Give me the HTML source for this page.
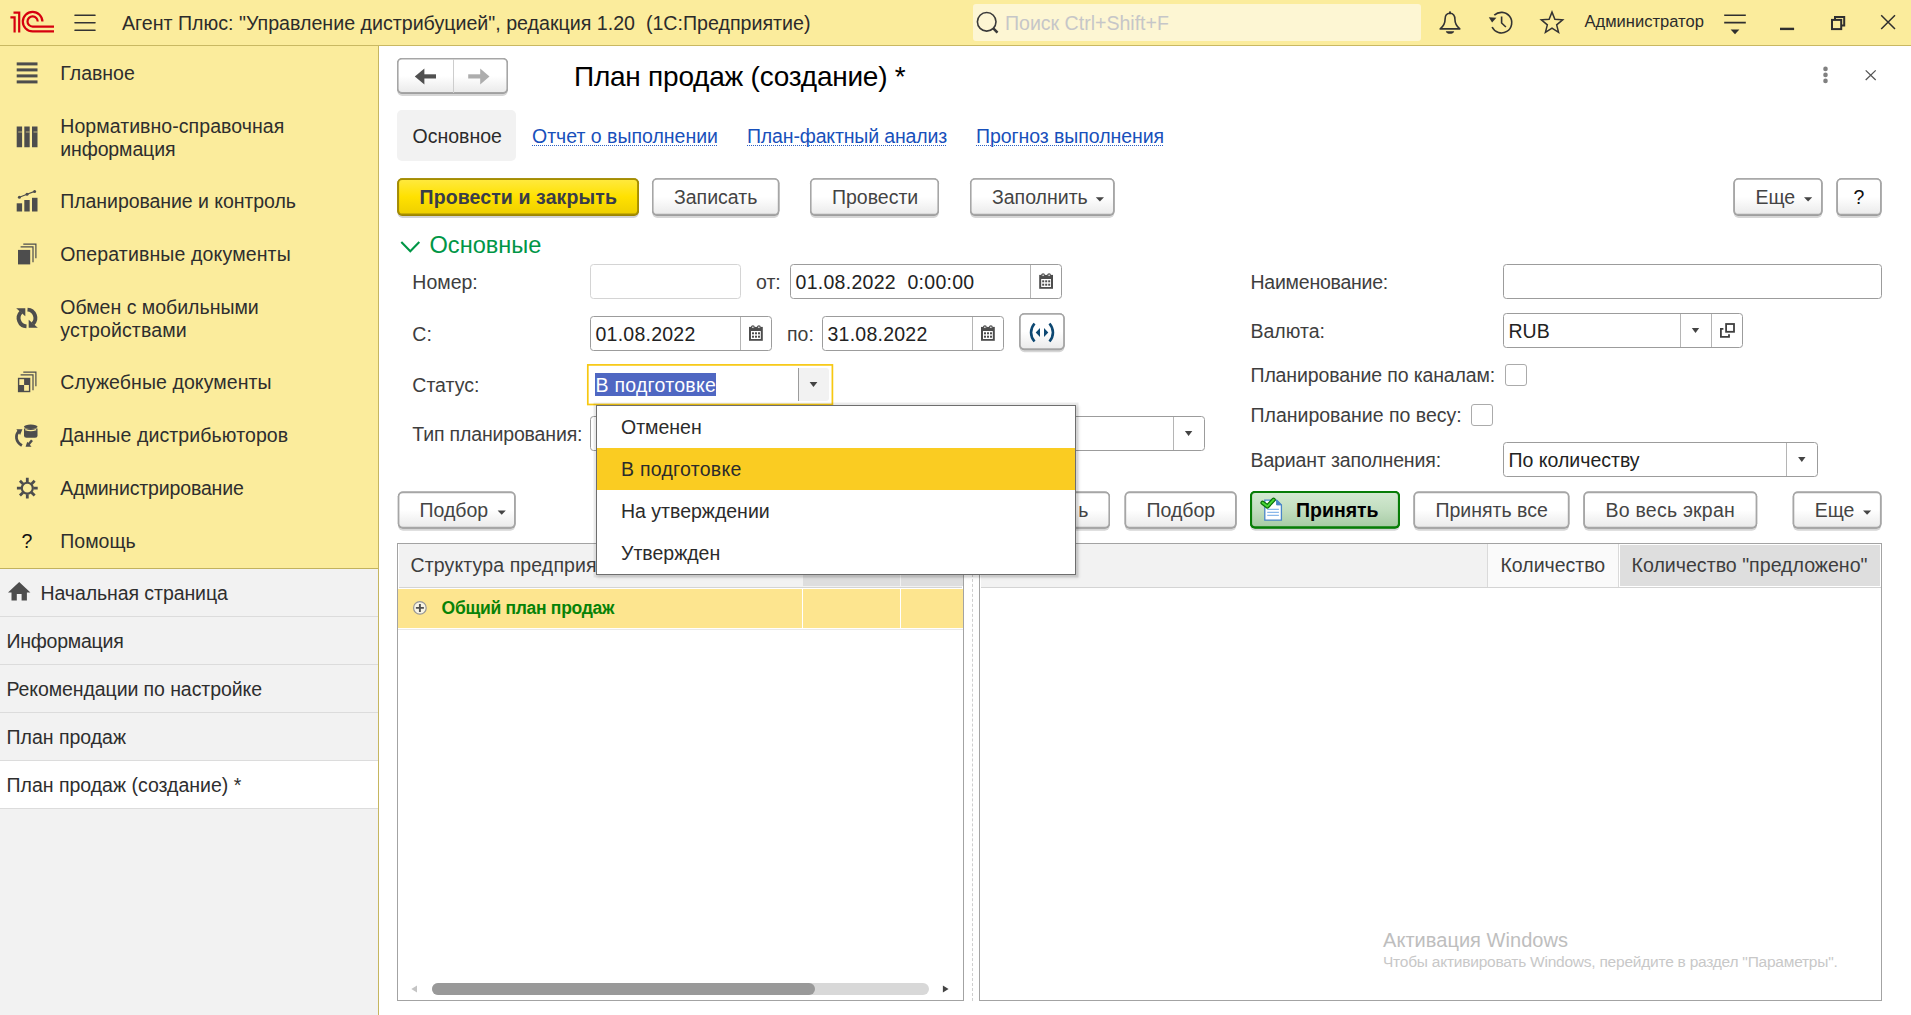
<!DOCTYPE html><html lang="ru"><head><meta charset="utf-8"><title>План продаж (создание)</title><style>
*{box-sizing:border-box;margin:0;padding:0}
html,body{width:1911px;height:1015px;overflow:hidden;background:#fff}
body{position:relative;font-family:"Liberation Sans",Arial,sans-serif;font-size:19.5px;color:#333}
.t{position:absolute;white-space:pre}
.b{position:absolute}
svg{position:absolute;overflow:visible}
.inp{position:absolute;border:1px solid #9c9c9c;border-radius:3.5px;background:#fff}
.lnk{color:#1850bb;}
.ul{position:absolute;height:0;border-top:1.4px dotted #2a5fc4}
</style></head><body>
<svg style="left:0;top:0" width="1" height="1"><defs><linearGradient id="gn" x1="0" y1="0" x2="0" y2="1"><stop offset="0" stop-color="#fff"/><stop offset="0.5" stop-color="#fff"/><stop offset="1" stop-color="#ebebeb"/></linearGradient><linearGradient id="gy" x1="0" y1="0" x2="0" y2="1"><stop offset="0" stop-color="#ffe93c"/><stop offset="0.5" stop-color="#ffe100"/><stop offset="1" stop-color="#efd000"/></linearGradient><linearGradient id="gg" x1="0" y1="0" x2="0" y2="1"><stop offset="0" stop-color="#d3e9d1"/><stop offset="0.5" stop-color="#c2dec0"/><stop offset="1" stop-color="#a8cca6"/></linearGradient></defs></svg>
<div class="b" style="left:0px;top:0px;width:1911px;height:46px;background:#fbec9c;border-bottom:1px solid #c9b862"></div>
<svg style="left:0;top:0" width="60" height="45" viewBox="0 0 60 45" fill="none" stroke="#d6000f" stroke-width="2.2" stroke-linejoin="miter">
<path d="M13.5 12.7H19.2V32.6"/><path d="M10.4 17.3H14.6V32.6"/>
<path d="M42.4 21.6A9.8 9.8 0 1 0 32.6 31.4H54"/>
<path d="M37.7 21.6A5.1 5.1 0 1 0 32.6 26.6H54"/>
</svg>
<svg style="left:0;top:0" width="120" height="45" stroke="#333" stroke-width="1.6" stroke-linecap="round"><path d="M75 15.2H95M75 22.7H95M75 30.2H95"/></svg>
<div class="t " style="left:122px;top:14px;font-size:19.64px;line-height:19.64px;color:#2b2b2b;font-weight:400;">Агент Плюс: "Управление дистрибуцией", редакция 1.20  (1С:Предприятие)</div>
<div class="b" style="left:973px;top:4px;width:448px;height:37px;background:#fdf6d3;border-radius:3px"></div>
<svg style="left:0;top:0" width="1911" height="45" fill="none" stroke="#3a3a3a" stroke-width="1.6"><circle cx="986.7" cy="21.8" r="9.3"/><path d="M993.3 28.4L997.5 32.6" stroke-width="2.6"/></svg>
<div class="t " style="left:1005px;top:14px;font-size:19.56px;line-height:19.56px;color:#c6c6c8;font-weight:400;">Поиск Ctrl+Shift+F</div>
<svg style="left:0;top:0" width="1911" height="45" fill="none" stroke="#333" stroke-width="1.6" stroke-linejoin="round">
<path d="M1450 13.300c-3.300 0-4.900 2.400-4.900 5.800c0 4.800-1.500 7.200-4.900 9.800h19.600c-3.400-2.600-4.900-5-4.900-9.800c0-3.400-1.600-5.800-4.900-5.800z"/>
<circle cx="1450" cy="12.300" r="1.100" fill="#333" stroke="none"/>
<path d="M1445.800 31.200h8.400c-0.800 3.500-7.600 3.500-8.400 0z" fill="#333" stroke="none"/>
<path d="M1494.300 15.200A10.300 10.300 0 1 1 1492.100 27"/>
<path d="M1488.800 17.200l7.600 0.600-4.300 4.600z" fill="#333" stroke="none"/>
<path d="M1501.600 16.600v6.400l4.300 4"/>
<path d="M1552.00 12.10L1554.88 19.34L1562.65 19.84L1556.66 24.81L1558.58 32.36L1552.00 28.20L1545.42 32.36L1547.34 24.81L1541.35 19.84L1549.12 19.34z" stroke-linejoin="miter" stroke-width="1.500"/>
</svg>
<div class="t " style="left:1584.5px;top:14px;font-size:16.56px;line-height:16.56px;color:#2b2b2b;font-weight:400;">Администратор</div>
<svg style="left:0;top:0" width="1911" height="45" fill="none" stroke="#2f2f2f" stroke-width="1.6">
<path d="M1724.200 15.200H1745.800M1724.200 22.600H1745.800"/><path d="M1730.600 29.600h8.800l-4.400 4.600z" fill="#2f2f2f" stroke="none"/>
<path d="M1780 28.900H1794.100" stroke-width="2.400"/>
<rect x="1832" y="19.900" width="9.200" height="9.200" stroke-width="2"/><path d="M1835 19.900V17H1844.200V25.500H1841.200" stroke-width="2"/>
<path d="M1881.200 15.200L1895 29M1895 15.200L1881.200 29" stroke-width="1.500"/>
</svg>
<div class="b" style="left:0px;top:46px;width:378px;height:522px;background:#fbec9c"></div>
<div class="b" style="left:0px;top:568px;width:378px;height:447px;background:#f2f2f2;border-top:1px solid #c2b25e"></div>
<div class="b" style="left:378px;top:46px;width:1px;height:969px;background:#c6b660"></div>
<div class="t " style="left:60.3px;top:64px;font-size:19.5px;line-height:19.5px;color:#2e2e2e;font-weight:400;">Главное</div>
<div class="t " style="left:60.3px;top:117px;font-size:19.5px;line-height:19.5px;color:#2e2e2e;font-weight:400;letter-spacing:0.057px;">Нормативно-справочная</div>
<div class="t " style="left:60.3px;top:140px;font-size:19.5px;line-height:19.5px;color:#2e2e2e;font-weight:400;letter-spacing:-0.120px;">информация</div>
<div class="t " style="left:60.3px;top:192px;font-size:19.5px;line-height:19.5px;color:#2e2e2e;font-weight:400;letter-spacing:-0.061px;">Планирование и контроль</div>
<div class="t " style="left:60.3px;top:245px;font-size:19.5px;line-height:19.5px;color:#2e2e2e;font-weight:400;letter-spacing:0.143px;">Оперативные документы</div>
<div class="t " style="left:60.3px;top:298px;font-size:19.5px;line-height:19.5px;color:#2e2e2e;font-weight:400;">Обмен с мобильными</div>
<div class="t " style="left:60.3px;top:321px;font-size:19.5px;line-height:19.5px;color:#2e2e2e;font-weight:400;letter-spacing:0.142px;">устройствами</div>
<div class="t " style="left:60.3px;top:373px;font-size:19.5px;line-height:19.5px;color:#2e2e2e;font-weight:400;letter-spacing:0.084px;">Служебные документы</div>
<div class="t " style="left:60.3px;top:426px;font-size:19.5px;line-height:19.5px;color:#2e2e2e;font-weight:400;letter-spacing:0.110px;">Данные дистрибьюторов</div>
<div class="t " style="left:60.3px;top:479px;font-size:19.5px;line-height:19.5px;color:#2e2e2e;font-weight:400;letter-spacing:-0.153px;">Администрирование</div>
<div class="t " style="left:60.3px;top:532px;font-size:19.5px;line-height:19.5px;color:#2e2e2e;font-weight:400;">Помощь</div>
<div class="t " style="left:21.6px;top:532px;font-size:19.5px;line-height:19.5px;color:#111;font-weight:400;">?</div>
<svg style="left:0;top:0" width="60" height="620" fill="#4d4d4d" stroke="none">
<rect x="16.700" y="62.400" width="20.800" height="3"/><rect x="16.700" y="68.400" width="20.800" height="3"/><rect x="16.700" y="74.400" width="20.800" height="3"/><rect x="16.700" y="80.400" width="20.800" height="3"/>
<path d="M16.700 126.500h5.400v20.800h-5.400zM24.300 126.500h5.400v20.800h-5.400zM32 126.500h5.500v20.800h-5.500z"/><path d="M18.200 132h3.900M25.800 132h3.900M33.500 132h4" stroke="#fbec9c" stroke-width="0.800" opacity="0.800"/>
<rect x="16.700" y="203.300" width="5.400" height="8.200"/><rect x="24.300" y="200" width="5.400" height="11.500"/><rect x="32" y="197.800" width="5.500" height="13.700"/>
<path d="M19.400 197.300L27 194.300L34.600 191.400" stroke="#4d4d4d" stroke-width="1.200" fill="none"/><circle cx="19.400" cy="197.300" r="1.500"/><circle cx="27" cy="194.300" r="1.500"/><circle cx="34.600" cy="191.400" r="1.500"/>
<rect x="18" y="249.900" width="12.200" height="14.500"/>
<path d="M20.600 246.900H33V262.300M23.300 244.100H35.900V258.300" stroke="#4d4d4d" stroke-width="1.200" fill="none"/>
<!-- sync -->
<g fill="none" stroke="#4d4d4d" stroke-width="3.900">
<path d="M26.500 326.350A8.350 8.350 0 0 1 21.100 312.100"/>
<path d="M27.500 309.650A8.350 8.350 0 0 1 32.900 323.900"/>
</g>
<path d="M16.200 308.200h9.100v8.100z"/><path d="M37.800 327.800h-9.100v-8.100z"/>
<!-- service docs -->
<rect x="18.600" y="378.500" width="11" height="13" fill="none" stroke="#4d4d4d" stroke-width="1.400"/>
<rect x="24.100" y="378.500" width="5.500" height="6.500"/><rect x="18.600" y="385" width="5.500" height="6.500"/>
<path d="M20.600 374.900H33V390.300M23.300 372.100H35.900V386.300" stroke="#4d4d4d" stroke-width="1.200" fill="none"/>
<!-- distributors data -->
<ellipse cx="30.750" cy="426.700" rx="6.800" ry="2.200"/>
<path d="M24 428.600h13.500v6.600a2.500 2.500 0 0 1 -2.500 2.500h-8.500a2.500 2.500 0 0 1 -2.500 -2.500z"/>
<path d="M25.300 429.600Q30.750 431.600 36.200 429.600" stroke="#fbec9c" stroke-width="1.300" fill="none"/>
<path d="M21.900 445.500C15.300 441.500 15 435 19.200 430.800" stroke="#4d4d4d" stroke-width="2.700" fill="none"/>
<path d="M16.400 429.200h6l-2.300 5.700z"/>
<path d="M32 440.200L28.300 444.800" stroke="#4d4d4d" stroke-width="2.500" fill="none"/>
<path d="M25.600 446.800h5.900l-4.300-5z"/>
<!-- gear -->
<g transform="translate(27.300 488.200)">
<circle r="5.450" fill="none" stroke="#4d4d4d" stroke-width="2.100"/>
<g stroke="#4d4d4d" stroke-width="2.800">
<path d="M0 -10.400V-6M0 10.400V6M-10.400 0H-6M10.400 0H6M-7.350 -7.350L-4.250 -4.250M7.350 7.350L4.250 4.250M-7.350 7.350L-4.250 4.250M7.350 -7.350L4.250 -4.250"/>
</g></g>
<!-- home -->
<path d="M19.200 582L8 592.500H11.500V600.500H16.800V594H21.600V600.500H26.900V592.500H30.400z"/>
</svg>
<div class="t " style="left:40.5px;top:584px;font-size:19.5px;line-height:19.5px;color:#2e2e2e;font-weight:400;letter-spacing:-0.078px;">Начальная страница</div>
<div class="b" style="left:0px;top:616px;width:378px;height:1px;background:#dcdcdc"></div>
<div class="t " style="left:6.5px;top:632px;font-size:19.5px;line-height:19.5px;color:#2e2e2e;font-weight:400;letter-spacing:-0.240px;">Информация</div>
<div class="b" style="left:0px;top:664px;width:378px;height:1px;background:#dcdcdc"></div>
<div class="t " style="left:6.5px;top:680px;font-size:19.5px;line-height:19.5px;color:#2e2e2e;font-weight:400;letter-spacing:-0.084px;">Рекомендации по настройке</div>
<div class="b" style="left:0px;top:712px;width:378px;height:1px;background:#dcdcdc"></div>
<div class="t " style="left:6.5px;top:728px;font-size:19.5px;line-height:19.5px;color:#2e2e2e;font-weight:400;">План продаж</div>
<div class="b" style="left:0px;top:760px;width:378px;height:48.5px;background:#fff;border-top:1px solid #dcdcdc;border-bottom:1px solid #dcdcdc"></div>
<div class="t " style="left:6.5px;top:776px;font-size:19.5px;line-height:19.5px;color:#2e2e2e;font-weight:400;">План продаж (создание) *</div>
<svg style="left:396px;top:57px" width="114.0" height="42.0"><rect x="1.30" y="3.00" width="110.40" height="36.00" rx="5" fill="#d6d6d6"/><rect x="1.00" y="1.00" width="111.00" height="36.00" rx="5" fill="#9b9b9b"/><rect x="1.00" y="1.00" width="111.00" height="35.40" rx="5" fill="#a6a6a6"/><rect x="2.60" y="2.60" width="107.80" height="32.30" rx="3.4" fill="url(#gn)"/></svg>
<div class="b" style="left:453px;top:59px;width:1px;height:34px;background:#cdcdcd"></div>
<svg style="left:0;top:0" width="600" height="100" fill="none">
<path d="M420 76.400H436" stroke="#505050" stroke-width="4.200"/><path d="M414.800 76.400L424.400 68.400V84.400z" fill="#505050"/>
<path d="M468.200 76.400H484" stroke="#adadad" stroke-width="4.200"/><path d="M489.500 76.400L480.200 68.400V84.400z" fill="#adadad"/>
</svg>
<div class="t " style="left:574px;top:63px;font-size:28px;line-height:28px;color:#000;font-weight:400;letter-spacing:-0.233px;">План продаж (создание) *</div>
<svg style="left:0;top:0" width="1911" height="100"><circle cx="1825.500" cy="68.900" r="2.300" fill="#808080"/><circle cx="1825.500" cy="74.900" r="2.300" fill="#808080"/><circle cx="1825.500" cy="80.900" r="2.300" fill="#808080"/>
<path d="M1865.700 70.400L1875.700 80M1875.700 70.400L1865.700 80" stroke="#555" stroke-width="1.300"/></svg>
<div class="b" style="left:397px;top:110px;width:118.5px;height:50.5px;background:#f2f2f2;border-radius:5px"></div>
<div class="t " style="left:412.5px;top:127px;font-size:19.5px;line-height:19.5px;color:#2b2b2b;font-weight:400;">Основное</div>
<div class="t lnk" style="left:532px;top:127px;font-size:19.5px;line-height:19.5px;color:#1850bb;font-weight:400;letter-spacing:0.002px;">Отчет о выполнении</div>
<div class="ul" style="left:532px;top:144.800px;width:185px"></div>
<div class="t lnk" style="left:747px;top:127px;font-size:19.5px;line-height:19.5px;color:#1850bb;font-weight:400;letter-spacing:-0.150px;">План-фактный анализ</div>
<div class="ul" style="left:747px;top:144.800px;width:199px"></div>
<div class="t lnk" style="left:976px;top:127px;font-size:19.5px;line-height:19.5px;color:#1850bb;font-weight:400;letter-spacing:-0.063px;">Прогноз выполнения</div>
<div class="ul" style="left:976px;top:144.800px;width:187px"></div>
<svg style="left:396px;top:177px" width="244.8" height="43.7"><rect x="1.50" y="3.20" width="241.20" height="37.70" rx="5" fill="#d4d4d6"/><rect x="1.20" y="1.20" width="241.80" height="37.70" rx="5" fill="#9a8200"/><rect x="1.20" y="1.20" width="241.80" height="37.10" rx="5" fill="#a58d00"/><rect x="3.10" y="3.10" width="238.00" height="33.40" rx="3.1" fill="url(#gy)"/></svg>
<div class="t " style="left:419.5px;top:188px;font-size:19.5px;line-height:19.5px;color:#383c4a;font-weight:700;letter-spacing:0.111px;">Провести и закрыть</div>
<svg style="left:651px;top:177px" width="130.4" height="43.7"><rect x="1.30" y="3.20" width="126.80" height="37.70" rx="5" fill="#d6d6d6"/><rect x="1.00" y="1.20" width="127.40" height="37.70" rx="5" fill="#9b9b9b"/><rect x="1.00" y="1.20" width="127.40" height="37.10" rx="5" fill="#a6a6a6"/><rect x="2.60" y="2.80" width="124.20" height="34.00" rx="3.4" fill="url(#gn)"/></svg>
<div class="t " style="left:674px;top:188px;font-size:19.5px;line-height:19.5px;color:#444;font-weight:400;">Записать</div>
<svg style="left:809px;top:177px" width="132.0" height="43.7"><rect x="1.30" y="3.20" width="128.40" height="37.70" rx="5" fill="#d6d6d6"/><rect x="1.00" y="1.20" width="129.00" height="37.70" rx="5" fill="#9b9b9b"/><rect x="1.00" y="1.20" width="129.00" height="37.10" rx="5" fill="#a6a6a6"/><rect x="2.60" y="2.80" width="125.80" height="34.00" rx="3.4" fill="url(#gn)"/></svg>
<div class="t " style="left:832px;top:188px;font-size:19.5px;line-height:19.5px;color:#444;font-weight:400;">Провести</div>
<svg style="left:969px;top:177px" width="147.6" height="43.7"><rect x="1.30" y="3.20" width="144.00" height="37.70" rx="5" fill="#d6d6d6"/><rect x="1.00" y="1.20" width="144.60" height="37.70" rx="5" fill="#9b9b9b"/><rect x="1.00" y="1.20" width="144.60" height="37.10" rx="5" fill="#a6a6a6"/><rect x="2.60" y="2.80" width="141.40" height="34.00" rx="3.4" fill="url(#gn)"/></svg>
<div class="t " style="left:992px;top:188px;font-size:19.5px;line-height:19.5px;color:#444;font-weight:400;">Заполнить</div>
<svg style="left:1732px;top:177px" width="92.2" height="43.7"><rect x="1.70" y="3.20" width="88.60" height="37.70" rx="5" fill="#d6d6d6"/><rect x="1.40" y="1.20" width="89.20" height="37.70" rx="5" fill="#9b9b9b"/><rect x="1.40" y="1.20" width="89.20" height="37.10" rx="5" fill="#a6a6a6"/><rect x="3.00" y="2.80" width="86.00" height="34.00" rx="3.4" fill="url(#gn)"/></svg>
<div class="t " style="left:1755.5px;top:188px;font-size:19.5px;line-height:19.5px;color:#444;font-weight:400;">Еще</div>
<svg style="left:1835px;top:177px" width="48.2" height="43.7"><rect x="1.70" y="3.20" width="44.60" height="37.70" rx="5" fill="#d6d6d6"/><rect x="1.40" y="1.20" width="45.20" height="37.70" rx="5" fill="#9b9b9b"/><rect x="1.40" y="1.20" width="45.20" height="37.10" rx="5" fill="#a6a6a6"/><rect x="3.00" y="2.80" width="42.00" height="34.00" rx="3.4" fill="url(#gn)"/></svg>
<div class="t " style="left:1853.6px;top:188px;font-size:19.5px;line-height:19.5px;color:#111;font-weight:400;">?</div>
<svg style="left:0;top:0" width="600" height="300" fill="none" stroke="#009646" stroke-width="2.100"><path d="M401.300 242L410.300 251.200L419.300 242"/></svg>
<div class="t " style="left:429.5px;top:234px;font-size:23.6px;line-height:23.6px;color:#009646;font-weight:400;">Основные</div>
<div class="t " style="left:412.3px;top:273px;font-size:19.5px;line-height:19.5px;color:#3e3e3e;font-weight:400;">Номер:</div>
<div class="inp" style="left:590px;top:264px;width:151px;height:35px;border-color:#d4d4d4"></div>
<div class="t " style="left:756px;top:273px;font-size:19.5px;line-height:19.5px;color:#3e3e3e;font-weight:400;">от:</div>
<div class="inp" style="left:790px;top:264px;width:272px;height:35px;"></div>
<div class="b" style="left:1030px;top:265px;width:1px;height:33px;background:#b5b5b5"></div>
<div class="t " style="left:795.5px;top:273px;font-size:19.5px;line-height:19.5px;color:#222;font-weight:400;letter-spacing:0.290px;">01.08.2022  0:00:00</div>
<div class="t " style="left:412.3px;top:325px;font-size:19.5px;line-height:19.5px;color:#3e3e3e;font-weight:400;">С:</div>
<div class="inp" style="left:590px;top:316px;width:182px;height:35px;"></div>
<div class="b" style="left:740px;top:317px;width:1px;height:33px;background:#b5b5b5"></div>
<div class="t " style="left:595.5px;top:325px;font-size:19.5px;line-height:19.5px;color:#222;font-weight:400;letter-spacing:0.240px;">01.08.2022</div>
<div class="t " style="left:787px;top:325px;font-size:19.5px;line-height:19.5px;color:#3e3e3e;font-weight:400;">по:</div>
<div class="inp" style="left:822px;top:316px;width:182px;height:35px;"></div>
<div class="b" style="left:972px;top:317px;width:1px;height:33px;background:#b5b5b5"></div>
<div class="t " style="left:827.5px;top:325px;font-size:19.5px;line-height:19.5px;color:#222;font-weight:400;letter-spacing:0.240px;">31.08.2022</div>
<svg style="left:1018px;top:312px" width="48.5" height="43.1"><rect x="1.50" y="3.20" width="44.90" height="37.10" rx="5" fill="#d6d6d6"/><rect x="1.20" y="1.20" width="45.50" height="37.10" rx="5" fill="#9b9b9b"/><rect x="1.20" y="1.20" width="45.50" height="36.50" rx="5" fill="#a6a6a6"/><rect x="2.80" y="2.80" width="42.30" height="33.40" rx="3.4" fill="url(#gn)"/></svg>
<svg style="left:0;top:0" width="1200" height="400" fill="none"><path d="M1034.500 323.500c-4.600 5.500-4.600 12.500 0 18M1049.500 323.500c4.600 5.500 4.600 12.500 0 18" stroke="#0d4872" stroke-width="2.600"/><path d="M1035.700 332.500l4.300-4.600v9.200zM1048.300 332.500l-4.300-4.600v9.200z" fill="#0d4872"/></svg>
<div class="t " style="left:412.3px;top:376px;font-size:19.5px;line-height:19.5px;color:#3e3e3e;font-weight:400;">Статус:</div>
<svg style="left:580px;top:360px" width="260" height="50"><rect x="7.800" y="4.900" width="244.600" height="39.600" fill="#fff" stroke="#f7c811" stroke-width="1.700"/></svg>
<div class="b" style="left:799px;top:368px;width:30px;height:33px;background:#f2f2f2;border-radius:0 3px 3px 0"></div>
<div class="b" style="left:798px;top:368px;width:1px;height:33px;background:#9c9c9c"></div>
<div class="b" style="left:595px;top:373px;width:121px;height:23px;background:#4f67c2"></div>
<div class="t " style="left:595.5px;top:376px;font-size:19.5px;line-height:19.5px;color:#fff;font-weight:400;letter-spacing:0.259px;">В подготовке</div>
<div class="t " style="left:412.3px;top:425px;font-size:19.5px;line-height:19.5px;color:#3e3e3e;font-weight:400;letter-spacing:-0.158px;">Тип планирования:</div>
<div class="inp" style="left:590px;top:416px;width:615px;height:35px;"></div>
<div class="b" style="left:1173px;top:417px;width:1px;height:33px;background:#b5b5b5"></div>
<div class="t " style="left:1250.5px;top:273px;font-size:19.5px;line-height:19.5px;color:#3e3e3e;font-weight:400;letter-spacing:-0.238px;">Наименование:</div>
<div class="inp" style="left:1503px;top:264px;width:379px;height:35px;"></div>
<div class="t " style="left:1250.5px;top:322px;font-size:19.5px;line-height:19.5px;color:#3e3e3e;font-weight:400;">Валюта:</div>
<div class="inp" style="left:1503px;top:313px;width:240px;height:35px;"></div>
<div class="b" style="left:1680px;top:314px;width:1px;height:33px;background:#b5b5b5"></div>
<div class="b" style="left:1711px;top:314px;width:1px;height:33px;background:#b5b5b5"></div>
<div class="t " style="left:1508.5px;top:322px;font-size:19.5px;line-height:19.5px;color:#222;font-weight:400;">RUB</div>
<div class="t " style="left:1250.5px;top:366px;font-size:19.5px;line-height:19.5px;color:#3e3e3e;font-weight:400;letter-spacing:-0.137px;">Планирование по каналам:</div>
<div class="b" style="left:1505px;top:364px;width:22px;height:22px;border:1px solid #ababab;border-radius:3px;background:#fff"></div>
<div class="t " style="left:1250.5px;top:406px;font-size:19.5px;line-height:19.5px;color:#3e3e3e;font-weight:400;">Планирование по весу:</div>
<div class="b" style="left:1471px;top:404px;width:22px;height:22px;border:1px solid #ababab;border-radius:3px;background:#fff"></div>
<div class="t " style="left:1250.5px;top:451px;font-size:19.5px;line-height:19.5px;color:#3e3e3e;font-weight:400;letter-spacing:-0.129px;">Вариант заполнения:</div>
<div class="inp" style="left:1503px;top:442px;width:315px;height:35px;"></div>
<div class="b" style="left:1786px;top:443px;width:1px;height:33px;background:#b5b5b5"></div>
<div class="t " style="left:1508.5px;top:451px;font-size:19.5px;line-height:19.5px;color:#222;font-weight:400;">По количеству</div>
<svg style="left:0;top:0" width="1911" height="600"><g transform="translate(1039.2 273.3)"><path d="M0 1.600h13.800v13.900h-13.800z" fill="#4d4d4d"/><rect x="2" y="5.700" width="9.800" height="8" fill="#fff"/><g fill="#4d4d4d"><rect x="3" y="7" width="2" height="2"/><rect x="6" y="7" width="2" height="2"/><rect x="9" y="7" width="2" height="2"/><rect x="3" y="10.400" width="2" height="2"/><rect x="6" y="10.400" width="2" height="2"/><rect x="9" y="10.400" width="2" height="2"/></g><circle cx="3.900" cy="1.900" r="1.350" fill="#fff" stroke="#4d4d4d" stroke-width="1.100"/><circle cx="9.900" cy="1.900" r="1.350" fill="#fff" stroke="#4d4d4d" stroke-width="1.100"/></g><g transform="translate(749 325.3)"><path d="M0 1.600h13.800v13.900h-13.800z" fill="#4d4d4d"/><rect x="2" y="5.700" width="9.800" height="8" fill="#fff"/><g fill="#4d4d4d"><rect x="3" y="7" width="2" height="2"/><rect x="6" y="7" width="2" height="2"/><rect x="9" y="7" width="2" height="2"/><rect x="3" y="10.400" width="2" height="2"/><rect x="6" y="10.400" width="2" height="2"/><rect x="9" y="10.400" width="2" height="2"/></g><circle cx="3.900" cy="1.900" r="1.350" fill="#fff" stroke="#4d4d4d" stroke-width="1.100"/><circle cx="9.900" cy="1.900" r="1.350" fill="#fff" stroke="#4d4d4d" stroke-width="1.100"/></g><g transform="translate(981 325.3)"><path d="M0 1.600h13.800v13.900h-13.800z" fill="#4d4d4d"/><rect x="2" y="5.700" width="9.800" height="8" fill="#fff"/><g fill="#4d4d4d"><rect x="3" y="7" width="2" height="2"/><rect x="6" y="7" width="2" height="2"/><rect x="9" y="7" width="2" height="2"/><rect x="3" y="10.400" width="2" height="2"/><rect x="6" y="10.400" width="2" height="2"/><rect x="9" y="10.400" width="2" height="2"/></g><circle cx="3.900" cy="1.900" r="1.350" fill="#fff" stroke="#4d4d4d" stroke-width="1.100"/><circle cx="9.900" cy="1.900" r="1.350" fill="#fff" stroke="#4d4d4d" stroke-width="1.100"/></g><path d="M809.600 381.900h7.800l-3.900 5z" fill="#444"/><path d="M1184.90 431.00h7.400l-3.700 5z" fill="#444"/><path d="M1691.80 328.00h7.400l-3.700 5z" fill="#444"/><path d="M1798.10 457.00h7.400l-3.700 5z" fill="#444"/><g fill="none" stroke="#3f3f3f" stroke-width="1.800"><rect x="1726.100" y="324" width="7.900" height="7.800"/><path d="M1723.400 328.900H1720.900V336.900H1729V334.300"/></g></svg>
<svg style="left:396px;top:490px" width="120.8" height="43.2"><rect x="2.10" y="3.60" width="117.20" height="37.20" rx="5" fill="#d6d6d6"/><rect x="1.80" y="1.60" width="117.80" height="37.20" rx="5" fill="#9b9b9b"/><rect x="1.80" y="1.60" width="117.80" height="36.60" rx="5" fill="#a6a6a6"/><rect x="3.40" y="3.20" width="114.60" height="33.50" rx="3.4" fill="url(#gn)"/></svg>
<div class="t " style="left:419.5px;top:501px;font-size:19.5px;line-height:19.5px;color:#444;font-weight:400;">Подбор</div>
<svg style="left:981px;top:490px" width="131.0" height="43.2"><rect x="1.30" y="3.60" width="127.40" height="37.20" rx="5" fill="#d6d6d6"/><rect x="1.00" y="1.60" width="128.00" height="37.20" rx="5" fill="#9b9b9b"/><rect x="1.00" y="1.60" width="128.00" height="36.60" rx="5" fill="#a6a6a6"/><rect x="2.60" y="3.20" width="124.80" height="33.50" rx="3.4" fill="url(#gn)"/></svg>
<div class="t " style="left:1078.3px;top:501px;font-size:19.5px;line-height:19.5px;color:#444;font-weight:400;">ь</div>
<svg style="left:1123px;top:490px" width="115.0" height="43.2"><rect x="1.90" y="3.60" width="111.40" height="37.20" rx="5" fill="#d6d6d6"/><rect x="1.60" y="1.60" width="112.00" height="37.20" rx="5" fill="#9b9b9b"/><rect x="1.60" y="1.60" width="112.00" height="36.60" rx="5" fill="#a6a6a6"/><rect x="3.20" y="3.20" width="108.80" height="33.50" rx="3.4" fill="url(#gn)"/></svg>
<div class="t " style="left:1146.5px;top:501px;font-size:19.5px;line-height:19.5px;color:#444;font-weight:400;">Подбор</div>
<svg style="left:1249px;top:490px" width="153.0" height="43.8"><rect x="1.30" y="3.00" width="149.40" height="37.80" rx="5" fill="#d6d6d8"/><rect x="1.00" y="1.00" width="150.00" height="37.80" rx="5" fill="#077d07"/><rect x="1.00" y="1.00" width="150.00" height="37.20" rx="5" fill="#077d07"/><rect x="3.10" y="3.10" width="145.80" height="33.10" rx="2.9" fill="url(#gg)"/></svg>
<div class="t " style="left:1296px;top:501px;font-size:19.5px;line-height:19.5px;color:#000;font-weight:700;">Принять</div>
<svg style="left:1412px;top:490px" width="158.9" height="43.2"><rect x="1.80" y="3.60" width="155.30" height="37.20" rx="5" fill="#d6d6d6"/><rect x="1.50" y="1.60" width="155.90" height="37.20" rx="5" fill="#9b9b9b"/><rect x="1.50" y="1.60" width="155.90" height="36.60" rx="5" fill="#a6a6a6"/><rect x="3.10" y="3.20" width="152.70" height="33.50" rx="3.4" fill="url(#gn)"/></svg>
<div class="t " style="left:1435.5px;top:501px;font-size:19.5px;line-height:19.5px;color:#444;font-weight:400;">Принять все</div>
<svg style="left:1582px;top:490px" width="176.8" height="43.2"><rect x="1.70" y="3.60" width="173.20" height="37.20" rx="5" fill="#d6d6d6"/><rect x="1.40" y="1.60" width="173.80" height="37.20" rx="5" fill="#9b9b9b"/><rect x="1.40" y="1.60" width="173.80" height="36.60" rx="5" fill="#a6a6a6"/><rect x="3.00" y="3.20" width="170.60" height="33.50" rx="3.4" fill="url(#gn)"/></svg>
<div class="t " style="left:1605.5px;top:501px;font-size:19.5px;line-height:19.5px;color:#444;font-weight:400;letter-spacing:0.229px;">Во весь экран</div>
<svg style="left:1791px;top:490px" width="91.8" height="43.2"><rect x="2.00" y="3.60" width="88.20" height="37.20" rx="5" fill="#d6d6d6"/><rect x="1.70" y="1.60" width="88.80" height="37.20" rx="5" fill="#9b9b9b"/><rect x="1.70" y="1.60" width="88.80" height="36.60" rx="5" fill="#a6a6a6"/><rect x="3.30" y="3.20" width="85.60" height="33.50" rx="3.4" fill="url(#gn)"/></svg>
<div class="t " style="left:1814.7px;top:501px;font-size:19.5px;line-height:19.5px;color:#444;font-weight:400;">Еще</div>
<svg style="left:0;top:0" width="1911" height="600" fill="#444">
<path d="M1095.800 197.200h8.200l-4.100 4.200z"/><path d="M1804 197.200h8.200l-4.100 4.200z"/>
<path d="M497.600 510.600h8.200l-4.100 4.200z"/><path d="M1863 510.600h8.200l-4.100 4.200z"/>
</svg>
<svg style="left:0;top:0" width="1911" height="600" fill="none">
<path d="M1264.800 500.100h11.800l4.800 4.800v15.200h-16.600z" fill="#fff" stroke="#4a86c8" stroke-width="1.300"/>
<path d="M1276.600 500.100v4.800h4.800z" fill="#4a86c8" stroke="#4a86c8" stroke-width="1"/>
<path d="M1267.200 509.300h11.700M1267.200 512.300h11.700M1267.200 515.300h11.700" stroke="#8ab8ea" stroke-width="1.300"/>
<path d="M1262.600 502.800l4.800 3.600l6.200-6.600" stroke="#0a6e0a" stroke-width="4.400" stroke-linecap="round" stroke-linejoin="round"/>
<path d="M1262.600 502.800l4.800 3.600l6.200-6.600" stroke="#48d636" stroke-width="2" stroke-linecap="round" stroke-linejoin="round"/>
</svg>
<div class="b" style="left:397px;top:543px;width:567px;height:458px;border:1px solid #a3a3a3;background:#fff"></div>
<div class="b" style="left:399px;top:544px;width:563px;height:44px;background:#f2f2f2;border-bottom:1px solid #d4d4d4"></div>
<div class="b" style="left:803px;top:545px;width:96.5px;height:41px;background:#dedede"></div>
<div class="b" style="left:901px;top:545px;width:62px;height:41px;background:#dedede"></div>
<div class="t " style="left:410.5px;top:556px;font-size:19.5px;line-height:19.5px;color:#3e3e3e;font-weight:400;letter-spacing:0.125px;">Структура предприятия</div>
<div class="b" style="left:398px;top:589px;width:565px;height:39px;background:#fde58f"></div>
<div class="b" style="left:802px;top:589px;width:1px;height:39px;background:#fff"></div>
<div class="b" style="left:900px;top:589px;width:1px;height:39px;background:#fff"></div>
<div class="b" style="left:398px;top:629px;width:565px;height:1px;background:#e9e9e9"></div>
<svg style="left:0;top:0" width="600" height="700" fill="none"><circle cx="419.900" cy="607.900" r="6.300" fill="#f8f4e4" stroke="#969696" stroke-width="1.200"/><path d="M415.900 607.900h8M419.900 603.900v8" stroke="#505050" stroke-width="1.900"/></svg>
<div class="t " style="left:441.6px;top:600px;font-size:17.5px;line-height:17.5px;color:#078207;font-weight:700;letter-spacing:-0.287px;">Общий план продаж</div>
<div class="b" style="left:432px;top:983px;width:497px;height:11.5px;background:#d8d8d8;border-radius:6px"></div>
<div class="b" style="left:432px;top:983px;width:382.5px;height:11.5px;background:#999;border-radius:6px"></div>
<svg style="left:0;top:0" width="1000" height="1015"><path d="M411.300 989.100l5.700-3.500v7z" fill="#c4c4c4"/><path d="M948.600 989.100l-5.700-3.500v7z" fill="#444"/></svg>
<div class="b" style="left:971.5px;top:543.5px;width:0px;height:457px;border-left:1px dashed #cfcfcf"></div>
<div class="b" style="left:979px;top:543px;width:903px;height:458px;border:1px solid #a3a3a3;background:#fff"></div>
<div class="b" style="left:981px;top:544px;width:900px;height:44px;background:#f2f2f2;border-bottom:1px solid #d4d4d4"></div>
<div class="b" style="left:1487px;top:544px;width:132px;height:43px;background:#fafafa;border-left:1px solid #dadada;border-right:1px solid #dadada"></div>
<div class="b" style="left:1619px;top:544px;width:262px;height:43px;background:#fff"></div>
<div class="b" style="left:1620px;top:545px;width:260px;height:41px;background:#dedede"></div>
<div class="t " style="left:1500.5px;top:556px;font-size:19.5px;line-height:19.5px;color:#3e3e3e;font-weight:400;">Количество</div>
<div class="t " style="left:1631.5px;top:556px;font-size:19.6px;line-height:19.6px;color:#3e3e3e;font-weight:400;">Количество "предложено"</div>
<div class="t " style="left:1383px;top:930px;font-size:20px;line-height:20px;color:#bebebe;font-weight:400;letter-spacing:0.040px;">Активация Windows</div>
<div class="t " style="left:1383px;top:954px;font-size:15.5px;line-height:15.5px;color:#c8c8c8;font-weight:400;letter-spacing:-0.233px;">Чтобы активировать Windows, перейдите в раздел "Параметры".</div>
<div class="b" style="left:596px;top:405px;width:480px;height:169.5px;background:#fff;border:1px solid #6e6e6e;box-shadow:0 0 0 2.5px rgba(0,0,0,.075),2px 2px 3px 1px rgba(0,0,0,.11)"></div>
<div class="b" style="left:597px;top:448px;width:478px;height:42px;background:#facc22"></div>
<div class="t " style="left:621px;top:418px;font-size:19.5px;line-height:19.5px;color:#2b2b2b;font-weight:400;">Отменен</div>
<div class="t " style="left:621px;top:460px;font-size:19.5px;line-height:19.5px;color:#2b2b2b;font-weight:400;letter-spacing:0.259px;">В подготовке</div>
<div class="t " style="left:621px;top:502px;font-size:19.5px;line-height:19.5px;color:#2b2b2b;font-weight:400;">На утверждении</div>
<div class="t " style="left:621px;top:544px;font-size:19.5px;line-height:19.5px;color:#2b2b2b;font-weight:400;">Утвержден</div>
</body></html>
